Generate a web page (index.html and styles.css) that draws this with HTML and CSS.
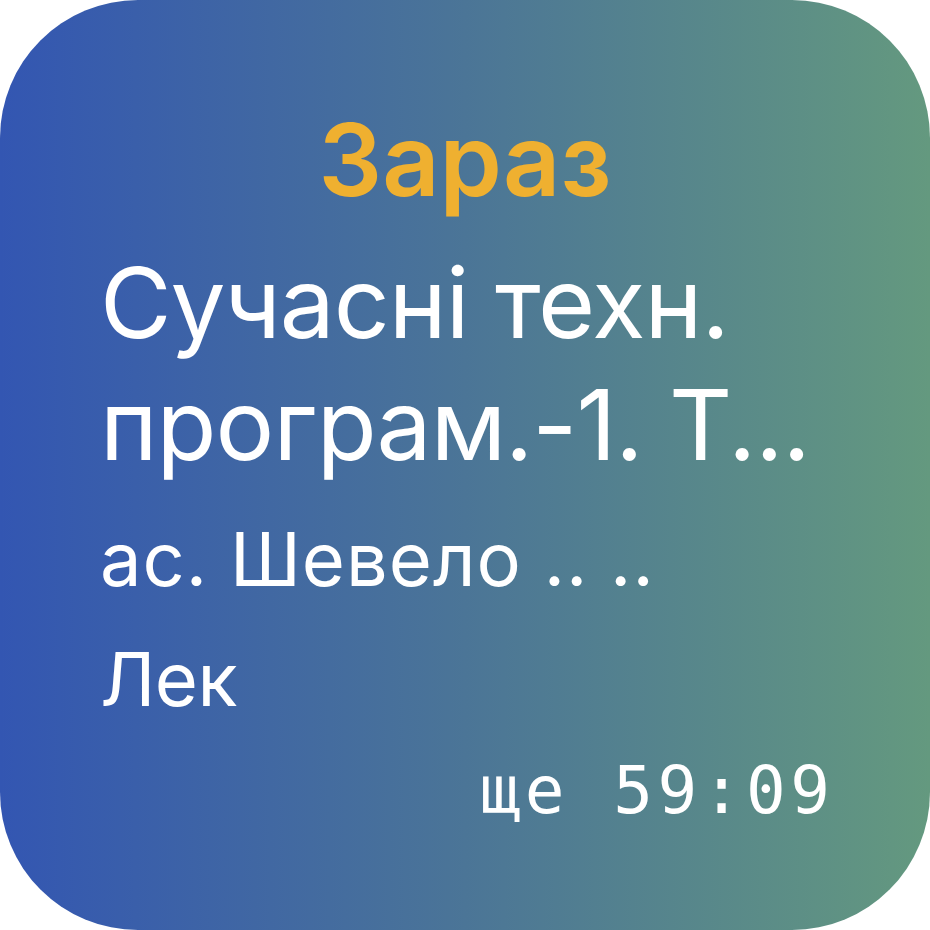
FILE: index.html
```html
<!DOCTYPE html>
<html lang="uk">
<head>
<meta charset="utf-8">
<link rel="stylesheet" href="styles.css">
</head>
<body>
<div class="card">
  <div class="title">Зараз</div>
  <div class="subject">Сучасні техн.<br>програм.-1. Т...</div>
  <div class="teacher">ас. Шевело .. ..</div>
  <div class="kind">Лек</div>
  <div class="timer">ще 59:09</div>
</div>
</body>
</html>
```

FILE: styles.css
```css
html, body {
  margin: 0;
  padding: 0;
  background: #ffffff;
}
.card {
  width: 930px;
  height: 930px;
  box-sizing: border-box;
  border-radius: 138px;
  background: linear-gradient(90deg, #3356b2 0%, #4b7597 50%, #64997f 100%);
  padding: 100px 100px 0 100px;
  display: flex;
  flex-direction: column;
  color: #ffffff;
  font-family: Inter, "Noto Sans", sans-serif;
}
.title {
  text-align: center;
  color: #efb030;
  font-weight: 600;
  font-size: 100px;
  line-height: 120px;
  margin-left: -100px;
  margin-right: -100px;
}
.subject {
  font-size: 98px;
  line-height: 122px;
  margin-top: 22px;
  white-space: nowrap;
  letter-spacing: -1px;
}
.teacher {
  font-size: 74px;
  line-height: 90px;
  margin-top: 28px;
  white-space: nowrap;
  letter-spacing: 1px;
}
.kind {
  font-size: 74px;
  line-height: 90px;
  margin-top: 30px;
  letter-spacing: -0.5px;
}
.timer {
  font-family: "DejaVu Sans Mono", monospace;
  font-size: 66px;
  line-height: 80px;
  letter-spacing: 4.5px;
  margin-right: -4.5px;
  text-align: right;
  margin-top: 27px;
}
```
